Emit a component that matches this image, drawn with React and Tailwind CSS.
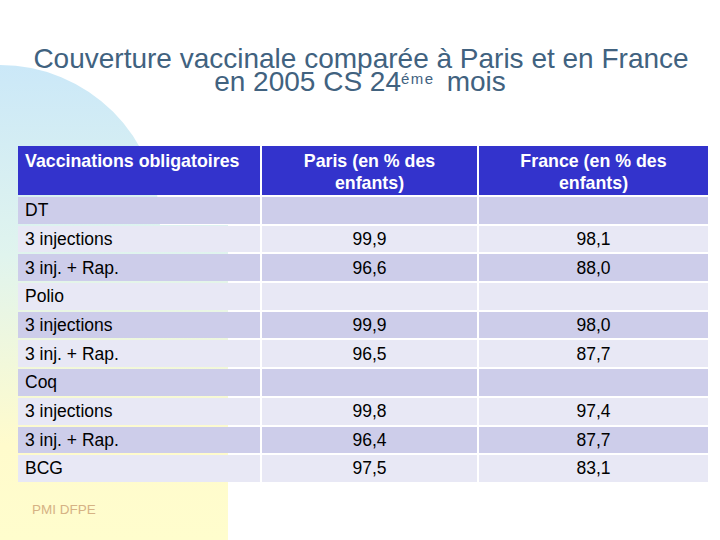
import React from "react";

const rows = [
  { label: "DT", paris: "", france: "", dark: true },
  { label: "3 injections", paris: "99,9", france: "98,1", dark: false },
  { label: "3 inj. + Rap.", paris: "96,6", france: "88,0", dark: true },
  { label: "Polio", paris: "", france: "", dark: false },
  { label: "3 injections", paris: "99,9", france: "98,0", dark: true },
  { label: "3 inj. + Rap.", paris: "96,5", france: "87,7", dark: false },
  { label: "Coq", paris: "", france: "", dark: true },
  { label: "3 injections", paris: "99,8", france: "97,4", dark: false },
  { label: "3 inj. + Rap.", paris: "96,4", france: "87,7", dark: true },
  { label: "BCG", paris: "97,5", france: "83,1", dark: false },
];

function Backdrop() {
  return (
    <svg
      className="absolute left-0 top-0"
      width="720"
      height="540"
      viewBox="0 0 720 540"
    >
      <defs>
        <linearGradient id="bgGrad" x1="0" y1="65" x2="0" y2="540" gradientUnits="userSpaceOnUse">
          <stop offset="0" stopColor="#cbe8f8" />
          <stop offset="0.4" stopColor="#e0f4ee" />
          <stop offset="0.8" stopColor="#fffbcc" />
          <stop offset="1" stopColor="#fffdcd" />
        </linearGradient>
      </defs>
      <path d="M0 65 A160 160 0 0 1 160 225 L228 225 L228 540 L0 540 Z" fill="url(#bgGrad)" />
    </svg>
  );
}

export default function App() {
  return (
    <div
      className="relative w-[720px] h-[540px] overflow-hidden bg-white"
      style={{ fontFamily: '"Liberation Sans", Arial, sans-serif' }}
    >
      <Backdrop />
      <div className="relative flex flex-col">
        <div className="pt-[47px] text-center text-[28px] leading-[23px] text-[#41627f]">
          <div className="pl-[2px]">Couverture vaccinale comparée à Paris et en France</div>
          <div>
            en 2005 CS 24<sup className="text-[15px] tracking-[1.5px]">éme</sup>
            <span className="ml-[12px]">mois</span>
          </div>
        </div>

        <div className="ml-[18px] mt-[53px] grid w-[690px] grid-cols-[242px_215px_229px] gap-x-[2px] gap-y-[2px] text-[17.5px] text-black">
          <div className="h-[49px] bg-[#3333cc] px-[7px] pt-[4px] text-[17.8px] font-bold leading-[22px] text-white">
            Vaccinations obligatoires
          </div>
          <div className="h-[49px] bg-[#3333cc] pt-[4px] text-center text-[17.8px] font-bold leading-[22px] text-white">
            Paris (en % des
            <br />
            enfants)
          </div>
          <div className="h-[49px] bg-[#3333cc] pt-[4px] text-center text-[17.8px] font-bold leading-[22px] text-white">
            France (en % des
            <br />
            enfants)
          </div>
          {rows.map((r, i) => {
            const bg = r.dark ? "bg-[#cdcdea]" : "bg-[#e8e8f5]";
            return (
              <React.Fragment key={i}>
                <div className={`flex h-[26.7px] items-center px-[7px] ${bg}`}>{r.label}</div>
                <div className={`flex h-[26.7px] items-center justify-center ${bg}`}>{r.paris}</div>
                <div className={`flex h-[26.7px] items-center justify-center ${bg}`}>{r.france}</div>
              </React.Fragment>
            );
          })}
        </div>

        <div className="ml-[32px] mt-[20px] text-[13.5px] leading-[16px] text-[#d6b284]">PMI DFPE</div>
      </div>
    </div>
  );
}
